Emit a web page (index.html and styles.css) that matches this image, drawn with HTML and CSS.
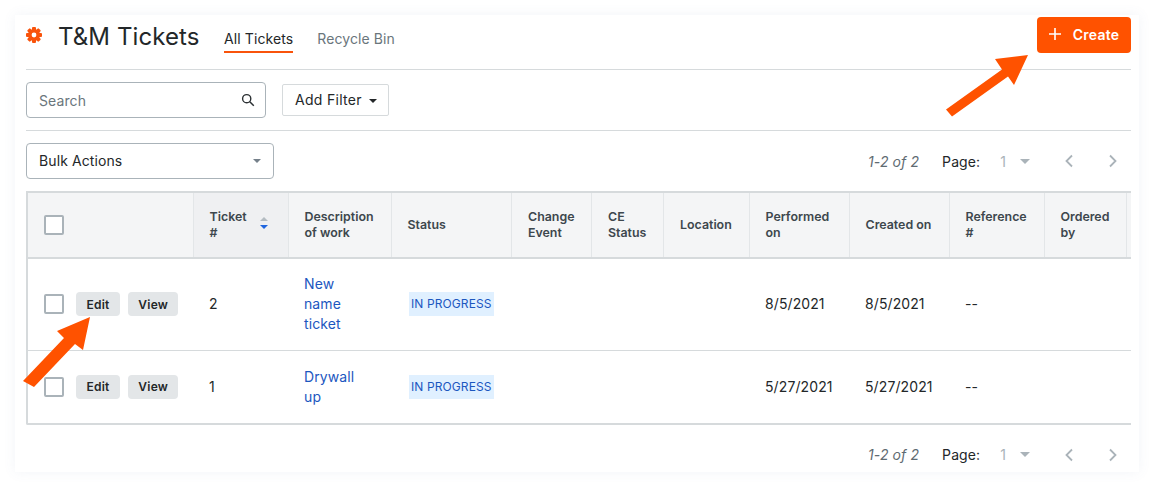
FILE: index.html
```html
<!DOCTYPE html>
<html lang="en">
    <head>
        <meta charset="UTF-8">
        <title>T&amp;M Tickets</title>
        <link rel="stylesheet" href="styles.css">
    </head>
    <body>
        <div class="card">
            <div class="header">
                <svg class="gear" viewBox="0 0 16 16" width="16" height="16">
                    <g fill="#f9530b">
                        <circle cx="8" cy="8" r="6"/>
                        <rect x="6" y="0" width="4" height="16" rx="1"/>
                        <rect x="6" y="0" width="4" height="16" rx="1" transform="rotate(45 8 8)"/>
                        <rect x="6" y="0" width="4" height="16" rx="1" transform="rotate(90 8 8)"/>
                        <rect x="6" y="0" width="4" height="16" rx="1" transform="rotate(135 8 8)"/>
                    </g>
                    <circle cx="8" cy="8" r="2.400" fill="#fff"/>
                </svg>
                <h1>T&amp;M Tickets</h1>
                <div class="tabs">
                    <a class="tab active">All Tickets</a>
                    <a class="tab">Recycle Bin</a>
                </div>
                <button class="create">
                    <svg viewBox="0 0 14 14" width="14" height="14"><path d="M7 1v12M1 7h12" stroke="#fff" stroke-width="1.6" fill="none"/></svg>
                    Create
                </button>
            </div>
            <div class="filters">
                <div class="search">
                    <span>Search</span>
                    <svg viewBox="0 0 14 14" width="14" height="14"><circle cx="5.700" cy="5.700" r="4.100" stroke="#2b3033" stroke-width="1.400" fill="none"/><path d="M8.800 8.800l4 4" stroke="#2b3033" stroke-width="1.500" fill="none"/></svg>
                </div>
                <button class="add-filter">Add Filter <i class="caret dark"></i></button>
            </div>
            <div class="actions">
                <div class="bulk">
                    <span>Bulk Actions</span>
                    <i class="caret"></i>
                </div>
                <div class="pager">
                    <em>1-2 of 2</em>
                    <span class="page-label">Page:</span>
                    <span class="page-num">1</span>
                    <i class="caret light"></i>
                    <svg class="prev" viewBox="0 0 10 14" width="10" height="14"><path d="M8 1.500L2.500 7 8 12.500" stroke="#aab3b9" stroke-width="1.800" fill="none"/></svg>
                    <svg class="next" viewBox="0 0 10 14" width="10" height="14"><path d="M2 1.500L7.500 7 2 12.500" stroke="#aab3b9" stroke-width="1.800" fill="none"/></svg>
                </div>
            </div>
            <div class="table-wrap">
                <table>
                    <colgroup>
                        <col class="c-check"><col class="c-ticket"><col class="c-desc"><col class="c-status"><col class="c-change"><col class="c-ce"><col class="c-loc"><col class="c-perf"><col class="c-created"><col class="c-ref"><col class="c-order"><col class="c-rest">
                    </colgroup>
                    <thead>
                        <tr>
                            <th><span class="check"></span></th>
                            <th class="sorted">
                                <div class="sort-head">
                                    <span>Ticket #</span>
                                    <svg viewBox="0 0 8 12" width="8" height="12"><path d="M4 0l4 4H0z" fill="#b4bcc2"/><path d="M4 12L0 8h8z" fill="#2066df"/></svg>
                                </div>
                            </th>
                            <th>Description of work</th>
                            <th>Status</th>
                            <th>Change Event</th>
                            <th>CE Status</th>
                            <th>Location</th>
                            <th>Performed on</th>
                            <th>Created on</th>
                            <th>Reference #</th>
                            <th>Ordered by</th>
                            <th></th>
                        </tr>
                    </thead>
                    <tbody>
                        <tr class="row-tall">
                            <td><div class="row-actions"><span class="check"></span><button>Edit</button><button>View</button></div></td>
                            <td>2</td>
                            <td><a>New name ticket</a></td>
                            <td><span class="badge">IN PROGRESS</span></td>
                            <td></td>
                            <td></td>
                            <td></td>
                            <td>8/5/2021</td>
                            <td>8/5/2021</td>
                            <td>--</td>
                            <td></td>
                            <td></td>
                        </tr>
                        <tr class="row-short">
                            <td><div class="row-actions"><span class="check"></span><button>Edit</button><button>View</button></div></td>
                            <td>1</td>
                            <td><a>Drywall up</a></td>
                            <td><span class="badge">IN PROGRESS</span></td>
                            <td></td>
                            <td></td>
                            <td></td>
                            <td>5/27/2021</td>
                            <td>5/27/2021</td>
                            <td>--</td>
                            <td></td>
                            <td></td>
                        </tr>
                    </tbody>
                </table>
            </div>
            <div class="footer">
                <div class="pager">
                    <em>1-2 of 2</em>
                    <span class="page-label">Page:</span>
                    <span class="page-num">1</span>
                    <i class="caret light"></i>
                    <svg class="prev" viewBox="0 0 10 14" width="10" height="14"><path d="M8 1.500L2.500 7 8 12.500" stroke="#aab3b9" stroke-width="1.800" fill="none"/></svg>
                    <svg class="next" viewBox="0 0 10 14" width="10" height="14"><path d="M2 1.500L7.500 7 2 12.500" stroke="#aab3b9" stroke-width="1.800" fill="none"/></svg>
                </div>
            </div>
        </div>
        <svg class="arrows" viewBox="0 0 1154 487" width="1154" height="487">
            <path fill="#ff5200" d="M946 109.500L1002 69.500 995 59 1028 55 1014 85 1008 76.500 952 116.500z"/>
            <path fill="#ff5200" d="M23 381L64 338 57 331 90 317 83 350 75 344 34 387z"/>
        </svg>
    </body>
</html>
```

FILE: styles.css
```css
* {
    font-family: "Inter", "Liberation Sans", sans-serif;
    box-sizing: border-box;
}

html, body {
    height: 487px;
    overflow: hidden;
}

body {
    margin: 0;
    padding: 15px;
    background: #fff;
    color: #232729;
    font-size: 14px;
    letter-spacing: 0.1px;
    position: relative;
}

.card {
    width: 1124px;
    height: 457px;
    padding: 0 8px 0 11px;
    background: #fff;
    box-shadow: 0 0 12px rgba(90, 110, 160, 0.08);
}

.header {
    display: flex;
    align-items: flex-start;
    height: 55px;
    border-bottom: 1px solid #d6dadc;
}

.gear {
    margin: 12px 16px 0 0;
}

h1 {
    margin: 6px 0 0 0;
    font-size: 24px;
    line-height: 32px;
    font-weight: 400;
    width: 166px;
}

.tabs {
    display: flex;
    gap: 24px;
    padding-top: 15px;
}

.tab {
    height: 23px;
    line-height: 18px;
    color: #6a767c;
}

.tab.active {
    color: #232729;
    border-bottom: 2px solid #f9530b;
}

.create {
    margin: 2px 0 0 auto;
    width: 94px;
    height: 36px;
    padding: 0 1px 2px 0;
    display: flex;
    align-items: center;
    justify-content: center;
    gap: 11px;
    border: 0;
    border-radius: 4px;
    background: #ff5200;
    color: #fff;
    font-size: 14px;
    font-weight: 600;
    letter-spacing: 0.25px;
}

.filters {
    display: flex;
    align-items: center;
    gap: 16px;
    height: 61px;
    border-bottom: 1px solid #d6dadc;
}

.search {
    width: 240px;
    height: 36px;
    padding: 0 10px 0 12px;
    display: flex;
    align-items: center;
    justify-content: space-between;
    border: 1px solid #aab3b9;
    border-radius: 4px;
    color: #6a767c;
}

.add-filter {
    width: 107px;
    height: 32px;
    padding: 0 0 2px 1px;
    background: #fff;
    border: 1px solid #d6dadc;
    border-radius: 2px;
    color: #232729;
    font-size: 14px;
    letter-spacing: 0.3px;
}

.caret {
    display: inline-block;
    width: 0;
    height: 0;
    border-left: 4px solid transparent;
    border-right: 4px solid transparent;
    border-top: 4px solid #75808a;
}

.caret.dark {
    border-top-color: #232729;
    margin-left: 3px;
    vertical-align: 2px;
}

.caret.light {
    border-left-width: 5px;
    border-right-width: 5px;
    border-top: 5px solid #aab3b9;
    margin-left: 14px;
}

.actions {
    display: flex;
    align-items: center;
    justify-content: space-between;
    height: 60px;
}

.bulk {
    width: 248px;
    height: 36px;
    padding: 0 12px 1px;
    display: flex;
    align-items: center;
    justify-content: space-between;
    border: 1px solid #aab3b9;
    border-radius: 4px;
}

.pager {
    display: flex;
    align-items: center;
    padding-right: 13px;
}

.pager em {
    color: #5f6b72;
    margin-right: 23px;
}

.page-num {
    color: #aab3b9;
    margin-left: 20px;
}

.prev {
    margin-left: 34px;
}

.next {
    margin-left: 34px;
}

.table-wrap {
    width: 1105px;
    height: 234px;
    overflow: hidden;
    border-top: 2px solid #d6dadc;
    border-left: 2px solid #d6dadc;
    border-bottom: 2px solid #d6dadc;
    border-bottom-left-radius: 2px;
}

table {
    table-layout: fixed;
    border-collapse: collapse;
    width: 1120px;
}

.c-check { width: 165px; }
.c-ticket { width: 95px; }
.c-desc { width: 103px; }
.c-status { width: 120.500px; }
.c-change { width: 80px; }
.c-ce { width: 72px; }
.c-loc { width: 85.500px; }
.c-perf { width: 100px; }
.c-created { width: 100px; }
.c-ref { width: 95px; }
.c-order { width: 82px; }
.c-rest { width: 22px; }

th {
    height: 65px;
    padding: 0 16px;
    background: #f4f5f6;
    border-right: 1px solid #e3e6e8;
    border-bottom: 2px solid #d6dadc;
    color: #3d474d;
    font-size: 12.400px;
    font-weight: 600;
    letter-spacing: 0;
    line-height: 16px;
    text-align: left;
}

th.sorted {
    background: #eff0f2;
}

.sort-head {
    display: flex;
    align-items: center;
    gap: 10px;
}

.sort-head span {
    width: 40px;
}

.sort-head svg {
    margin-bottom: 4px;
}

td {
    padding: 0 16px;
    line-height: 20px;
    border-bottom: 1px solid #d6dadc;
}

td:first-child {
    padding-right: 0;
}

.row-tall td {
    height: 92px;
}

.row-short td {
    height: 73px;
    border-bottom: 0;
}

td a {
    display: block;
    color: #1c57bf;
}

.check {
    display: block;
    flex: none;
    width: 20px;
    height: 20px;
    background: #fff;
    border: 2px solid #aab3b9;
    border-radius: 2px;
}

.row-actions {
    display: flex;
    align-items: center;
    gap: 8px;
}

.row-actions .check {
    margin-right: 4px;
}

.row-actions button {
    flex: none;
    height: 24px;
    padding: 0 10.300px;
    background: #e3e6e8;
    border: 0;
    border-radius: 4px;
    color: #232729;
    font-size: 12px;
    font-weight: 600;
    letter-spacing: 0.25px;
}

.row-actions button:first-of-type {
    width: 44px;
}

.row-actions button:last-of-type {
    width: 50px;
}

.badge {
    display: inline-block;
    margin-left: 2px;
    padding: 0 2px;
    background: #e0f0ff;
    color: #1c57bf;
    font-size: 12px;
    letter-spacing: 0.1px;
    line-height: 24px;
}

.footer {
    display: flex;
    justify-content: flex-end;
    padding-top: 21px;
}

.arrows {
    position: absolute;
    top: 0;
    left: 0;
    pointer-events: none;
}
```
